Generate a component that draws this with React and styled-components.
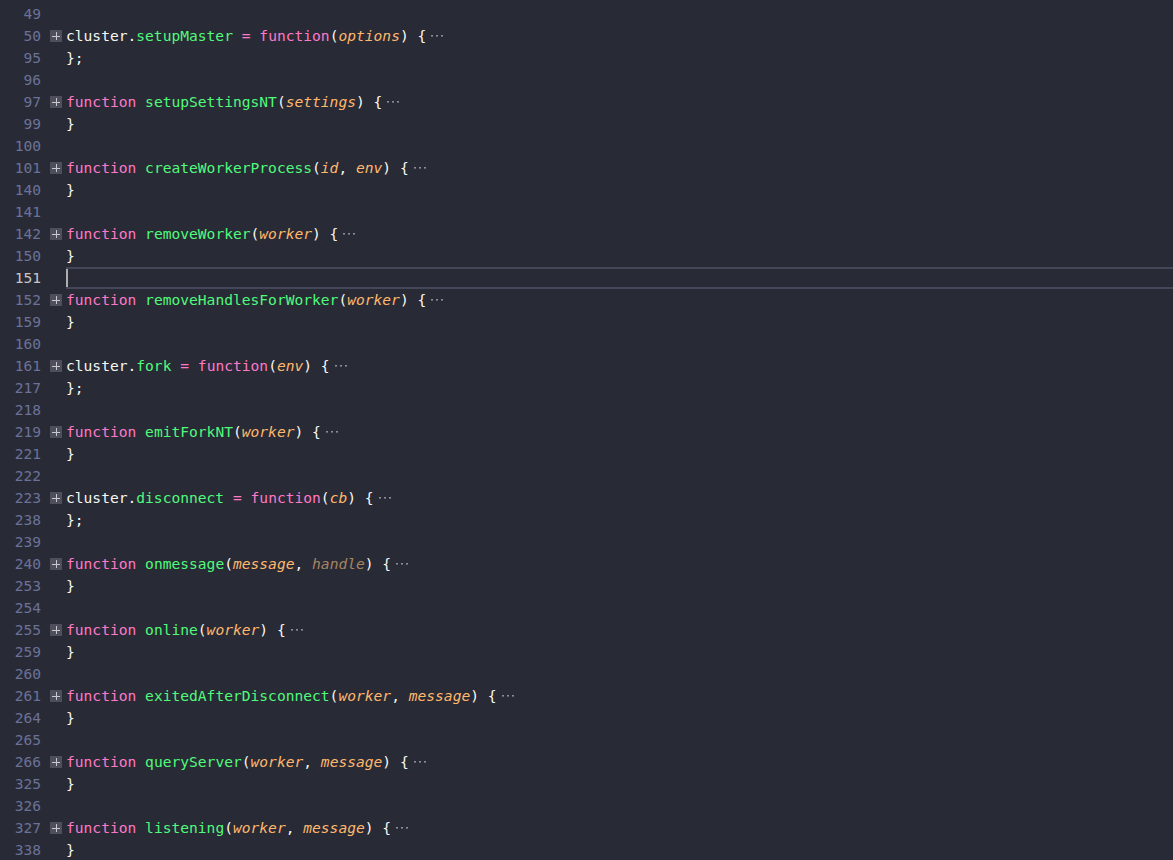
import React from "react";
import styled, { createGlobalStyle } from "styled-components";

const Global = createGlobalStyle`
  html, body { margin: 0; padding: 0; background: #282a36; }
  body { overflow: hidden; }
`;

const colors = {
  plain: "#f8f8f2",
  kw: "#ff79c6",
  fn: "#50fa7b",
  param: "#ffb86c",
  unused: "#a58462",
  dots: "#8b8d98",
};

const Editor = styled.div`
  width: 1173px;
  height: 860px;
  background: #282a36;
  padding-top: 3px;
  box-sizing: border-box;
  font-family: "DejaVu Sans Mono", "Liberation Mono", monospace;
  font-size: 14.6px;
  overflow: hidden;
`;

const Row = styled.div`
  display: flex;
  height: 22px;
  align-items: stretch;
`;

const LineNo = styled.div`
  width: 41px;
  text-align: right;
  line-height: 22px;
  color: ${(p) => (p.$active ? "#c6c6c6" : "#6b7298")};
  flex: none;
`;

const FoldCell = styled.div`
  width: 25px;
  flex: none;
  display: flex;
  align-items: center;
  padding-left: 9px;
  box-sizing: border-box;
`;

const FoldButton = styled.div`
  width: 12px;
  height: 12px;
  background: #4d4f5c;
  position: relative;
  &::before, &::after {
    content: "";
    position: absolute;
    background: #c8c9cf;
  }
  &::before { left: 2px; right: 2px; top: 5.5px; height: 1px; }
  &::after { top: 2px; bottom: 2px; left: 5.5px; width: 1px; }
`;

const Code = styled.div`
  flex: 1;
  line-height: ${(p) => (p.$active ? "18px" : "22px")};
  white-space: pre;
  color: ${colors.plain};
  position: relative;
  ${(p) =>
    p.$active &&
    `
    border-top: 2px solid #44475a;
    border-bottom: 2px solid #44475a;
  `}
`;

const Cursor = styled.span`
  position: absolute;
  left: 0;
  top: 0;
  bottom: 0;
  width: 2px;
  background: #aeafad;
`;

const Tok = styled.span`
  color: ${(p) => colors[p.$t] || colors.plain};
  font-style: ${(p) => (p.$t === "param" || p.$t === "unused" ? "italic" : "normal")};
`;

const Dots = styled.svg`
  margin-left: 5px;
  vertical-align: middle;
  position: relative;
  top: -2px;
`;

const Ellipsis = () => (
  <Dots width="12" height="3" viewBox="0 0 12 3">
    <rect x="0" y="1" width="2" height="1.6" fill={colors.dots} />
    <rect x="5" y="1" width="2" height="1.6" fill={colors.dots} />
    <rect x="10" y="1" width="2" height="1.6" fill={colors.dots} />
  </Dots>
);

const K = (s) => ["kw", s];
const F = (s) => ["fn", s];
const P = (s) => ["param", s];
const U = (s) => ["unused", s];
const T = (s) => ["plain", s];

const fnDecl = (name, params) => {
  const toks = [K("function"), T(" "), F(name), T("(")];
  params.forEach((p, i) => {
    if (i > 0) toks.push(T(", "));
    toks.push(p);
  });
  toks.push(T(") {"));
  return toks;
};

const memberDecl = (prop, params) => {
  const toks = [T("cluster."), F(prop), T(" "), K("="), T(" "), K("function"), T("(")];
  params.forEach((p, i) => {
    if (i > 0) toks.push(T(", "));
    toks.push(p);
  });
  toks.push(T(") {"));
  return toks;
};

const rows = [
  { n: 49 },
  { n: 50, fold: true, toks: memberDecl("setupMaster", [P("options")]) },
  { n: 95, toks: [T("};")] },
  { n: 96 },
  { n: 97, fold: true, toks: fnDecl("setupSettingsNT", [P("settings")]) },
  { n: 99, toks: [T("}")] },
  { n: 100 },
  { n: 101, fold: true, toks: fnDecl("createWorkerProcess", [P("id"), P("env")]) },
  { n: 140, toks: [T("}")] },
  { n: 141 },
  { n: 142, fold: true, toks: fnDecl("removeWorker", [P("worker")]) },
  { n: 150, toks: [T("}")] },
  { n: 151, active: true },
  { n: 152, fold: true, toks: fnDecl("removeHandlesForWorker", [P("worker")]) },
  { n: 159, toks: [T("}")] },
  { n: 160 },
  { n: 161, fold: true, toks: memberDecl("fork", [P("env")]) },
  { n: 217, toks: [T("};")] },
  { n: 218 },
  { n: 219, fold: true, toks: fnDecl("emitForkNT", [P("worker")]) },
  { n: 221, toks: [T("}")] },
  { n: 222 },
  { n: 223, fold: true, toks: memberDecl("disconnect", [P("cb")]) },
  { n: 238, toks: [T("};")] },
  { n: 239 },
  { n: 240, fold: true, toks: fnDecl("onmessage", [P("message"), U("handle")]) },
  { n: 253, toks: [T("}")] },
  { n: 254 },
  { n: 255, fold: true, toks: fnDecl("online", [P("worker")]) },
  { n: 259, toks: [T("}")] },
  { n: 260 },
  { n: 261, fold: true, toks: fnDecl("exitedAfterDisconnect", [P("worker"), P("message")]) },
  { n: 264, toks: [T("}")] },
  { n: 265 },
  { n: 266, fold: true, toks: fnDecl("queryServer", [P("worker"), P("message")]) },
  { n: 325, toks: [T("}")] },
  { n: 326 },
  { n: 327, fold: true, toks: fnDecl("listening", [P("worker"), P("message")]) },
  { n: 338, toks: [T("}")] },
];

export default function App() {
  return (
    <>
      <Global />
      <Editor>
        {rows.map((r) => (
          <Row key={r.n}>
            <LineNo $active={r.active}>{r.n}</LineNo>
            <FoldCell>{r.fold && <FoldButton />}</FoldCell>
            <Code $active={r.active}>
              {r.active && <Cursor />}
              {(r.toks || []).map(([t, s], i) => (
                <Tok key={i} $t={t}>
                  {s}
                </Tok>
              ))}
              {r.fold && <Ellipsis />}
            </Code>
          </Row>
        ))}
      </Editor>
    </>
  );
}
